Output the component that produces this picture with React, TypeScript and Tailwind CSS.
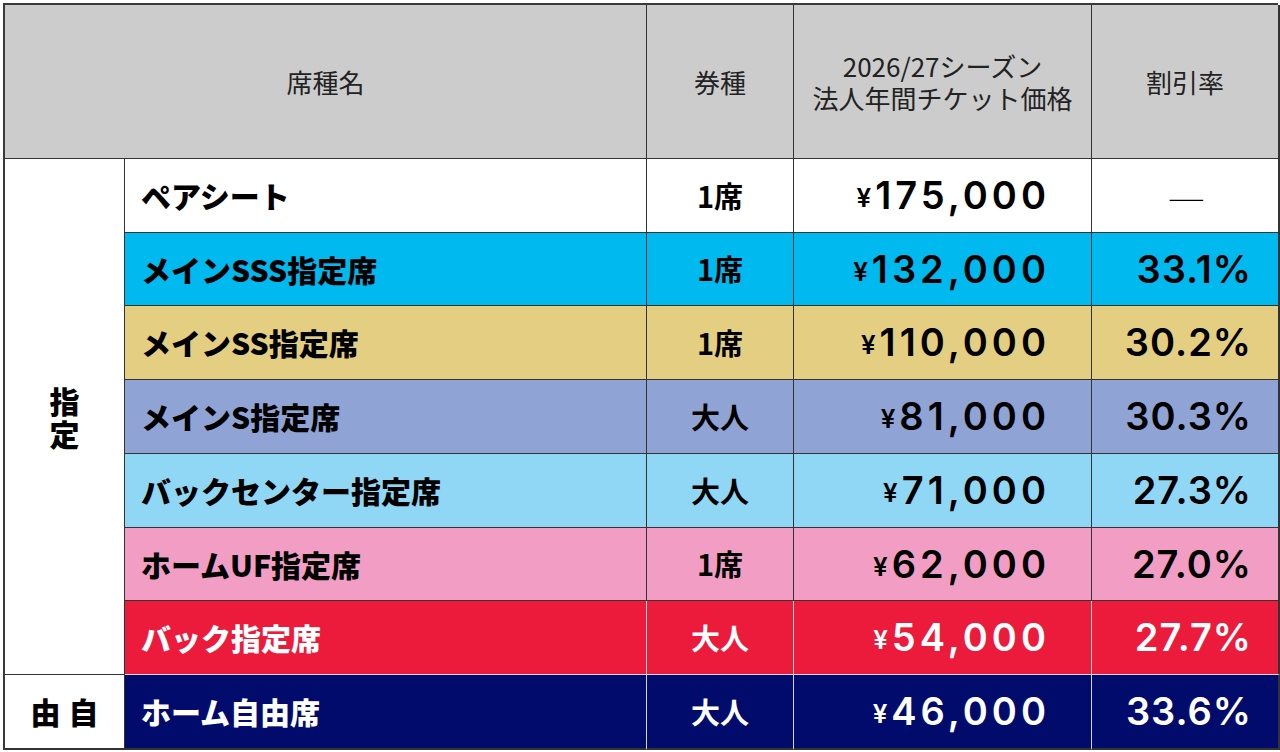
const JP = { fontFamily: '"Noto Sans CJK JP", sans-serif' };
const NUM = { fontFamily: 'Inter, "Noto Sans CJK JP", sans-serif' };

type Row = {
  name: string;
  kind: string;
  price: string;
  rate: string;
  bg: string;
  dark?: boolean;
};

const ROWS: Row[] = [
  { name: "ペアシート", kind: "1席", price: "175,000", rate: "—", bg: "bg-white" },
  { name: "メインSSS指定席", kind: "1席", price: "132,000", rate: "33.1%", bg: "bg-[#00b9ef]" },
  { name: "メインSS指定席", kind: "1席", price: "110,000", rate: "30.2%", bg: "bg-[#e4ce82]" },
  { name: "メインS指定席", kind: "大人", price: "81,000", rate: "30.3%", bg: "bg-[#8fa4d4]" },
  { name: "バックセンター指定席", kind: "大人", price: "71,000", rate: "27.3%", bg: "bg-[#90d7f6]" },
  { name: "ホームUF指定席", kind: "1席", price: "62,000", rate: "27.0%", bg: "bg-[#f29dc4]" },
  { name: "バック指定席", kind: "大人", price: "54,000", rate: "27.7%", bg: "bg-[#ec1a3b]", dark: true },
  { name: "ホーム自由席", kind: "大人", price: "46,000", rate: "33.6%", bg: "bg-[#000b6b]", dark: true },
];

export default function App() {
  return (
    <div className="min-h-[752px] bg-white pl-[3px] pt-[3px]">
      <div
        className="grid w-[1275px] grid-cols-[120px_522px_147px_298px_188px] grid-rows-[154px_74px_73px_74px_74px_74px_73px_74px_75px] border-l-2 border-t-2 border-[#3a3a3a]"
        style={JP}
      >
        {/* header */}
        <div className="col-span-2 flex items-center justify-center border-b border-r border-[#333] bg-[#cccccc] text-[26px] text-[#222]">
          席種名
        </div>
        <div className="flex items-center justify-center border-b border-r border-[#333] bg-[#cccccc] text-[26px] text-[#222]">
          券種
        </div>
        <div className="flex flex-col items-center justify-center border-b border-r border-[#333] bg-[#cccccc] text-[26px] leading-[32px] text-[#222]">
          <span>2026/27シーズン</span>
          <span>法人年間チケット価格</span>
        </div>
        <div className="flex items-center justify-center border-b border-r-2 border-[#333] bg-[#cccccc] text-[26px] text-[#222]">
          割引率
        </div>

        {/* group label: 指定 */}
        <div className="row-span-7 flex items-center justify-center border-b border-r border-[#333] bg-white">
          <div className="flex flex-col items-center text-[30px] font-black leading-[33px] text-black">
            <span>指</span>
            <span>定</span>
          </div>
        </div>

        {ROWS.map((r, i) => {
          const last = i === ROWS.length - 1;
          const line = r.dark ? "border-[#d6d6d6]" : "border-[#333]";
          const bottom = last ? "border-b-2 border-b-[#333]" : r.dark ? "border-b border-b-[#d6d6d6]" : "border-b border-b-[#333]";
          const text = r.dark ? "text-white" : "text-black";
          return [
            last ? (
              <div
                key={`g${i}`}
                className="flex items-center justify-center gap-[8px] border-b-2 border-r border-[#333] bg-white text-[30px] font-black text-black"
              >
                <span>由</span>
                <span>自</span>
              </div>
            ) : null,
            <div
              key={`n${i}`}
              className={`flex items-center pl-[16px] text-[30px] font-black border-r ${line} ${bottom} ${r.bg} ${text}`}
            >
              {r.name}
            </div>,
            <div
              key={`k${i}`}
              className={`flex items-center justify-center text-[29px] font-bold border-r ${line} ${bottom} ${r.bg} ${text}`}
            >
              {r.kind}
            </div>,
            <div
              key={`p${i}`}
              className={`flex items-center justify-end pr-[41px] border-r ${line} ${bottom} ${r.bg} ${text}`}
              style={NUM}
            >
              <span className="mr-[4px] mt-[4px] text-[26px] font-semibold">¥</span>
              <span className="text-[38px] font-semibold tracking-[4px]">{r.price}</span>
            </div>,
            <div
              key={`r${i}`}
              className={`flex items-center border-r-2 border-r-[#333] ${bottom} ${r.bg} ${text} ${
                r.rate === "—" ? "justify-center pl-[2px]" : "justify-end pr-[26px]"
              }`}
              style={r.rate === "—" ? JP : NUM}
            >
              {r.rate === "—" ? (
                <span className="inline-block scale-x-150 text-[28px] font-light">—</span>
              ) : (
                <span className="text-[38px] font-semibold tracking-[1px]">{r.rate}</span>
              )}
            </div>,
          ];
        })}
      </div>
    </div>
  );
}
